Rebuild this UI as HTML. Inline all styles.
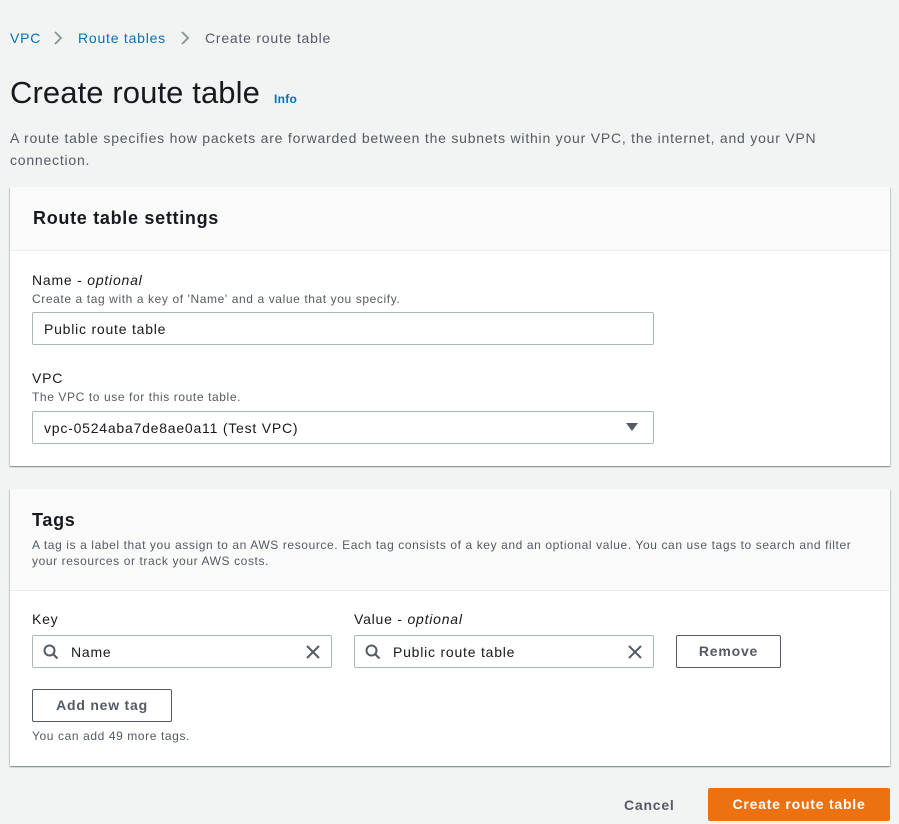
<!DOCTYPE html>
<html><head><meta charset="utf-8"><style>
*{box-sizing:border-box;margin:0;padding:0}
body{width:899px;height:824px;background:#f2f3f3;font-family:"Liberation Sans","DejaVu Sans",sans-serif;color:#16191f;position:relative;overflow:hidden;font-size:14px;letter-spacing:.78px}
.a{position:absolute;white-space:nowrap}
.card{position:absolute;left:10px;width:880px;background:#fff;box-shadow:0 1px 1px rgba(0,28,36,.3),1px 1px 1px rgba(0,28,36,.15),-1px 1px 1px rgba(0,28,36,.15)}
.hdr{position:absolute;left:0;top:0;width:100%;background:#fafafa;border-bottom:1px solid #eaeded}
.inp{position:absolute;height:33px;border:1px solid #aab7b8;border-radius:2px;background:#fff}
.inp span{position:absolute;top:8px;font-size:14px;color:#16191f}
.sm{font-size:12px;color:#545b64;letter-spacing:.6px}
.btn{position:absolute;border:1px solid #545b64;border-radius:2px;background:#fff;font-weight:bold;color:#545b64;text-align:center;font-size:14px}
h2{font-size:18px;font-weight:bold;letter-spacing:.7px}
</style></head><body>
<div class="a" style="left:10px;top:30px;color:#0073bb">VPC</div>
<svg class="a" style="left:52px;top:30px" width="12" height="16"><path d="M3 2l6 6-6 6" fill="none" stroke="#879596" stroke-width="1.8"/></svg>
<div class="a" style="left:78px;top:30px;color:#0073bb">Route tables</div>
<svg class="a" style="left:179px;top:30px" width="12" height="16"><path d="M3 2l6 6-6 6" fill="none" stroke="#879596" stroke-width="1.8"/></svg>
<div class="a" style="left:205px;top:30px;color:#545b64">Create route table</div>
<div class="a" style="left:10px;top:75px;font-size:31px;letter-spacing:.1px">Create route table</div>
<div class="a" style="left:274px;top:92px;font-size:12px;font-weight:bold;color:#0073bb;letter-spacing:.3px">Info</div>
<div class="a" style="left:10px;top:127px;color:#545b64;line-height:22px;white-space:normal;width:830px">A route table specifies how packets are forwarded between the subnets within your VPC, the internet, and your VPN connection.</div>

<div class="card" style="top:187px;height:279px">
 <div class="hdr" style="height:64px"></div>
 <h2 class="a" style="left:23px;top:21px">Route table settings</h2>
 <div class="a" style="left:22px;top:85px">Name - <i>optional</i></div>
 <div class="a sm" style="left:22px;top:105px">Create a tag with a key of 'Name' and a value that you specify.</div>
 <div class="inp" style="left:22px;top:125px;width:622px"><span style="left:11px">Public route table</span></div>
 <div class="a" style="left:22px;top:183px">VPC</div>
 <div class="a sm" style="left:22px;top:203px">The VPC to use for this route table.</div>
 <div class="inp" style="left:22px;top:224px;width:622px"><span style="left:11px">vpc-0524aba7de8ae0a11 (Test VPC)</span>
  <svg class="a" style="left:593px;top:11px" width="12" height="9"><path d="M0 0h12L6 8z" fill="#545b64"/></svg></div>
</div>

<div class="card" style="top:489px;height:277px">
 <div class="hdr" style="height:102px"></div>
 <h2 class="a" style="left:22px;top:21px">Tags</h2>
 <div class="a sm" style="left:22px;top:48px;white-space:normal;width:830px;line-height:16px">A tag is a label that you assign to an AWS resource. Each tag consists of a key and an optional value. You can use tags to search and filter your resources or track your AWS costs.</div>
 <div class="a" style="left:22px;top:122px">Key</div>
 <div class="a" style="left:344px;top:122px">Value - <i>optional</i></div>
 <div class="inp" style="left:22px;top:146px;width:300px">
  <svg class="a" style="left:10px;top:8px" width="16" height="16"><circle cx="6.5" cy="6.5" r="5" fill="none" stroke="#545b64" stroke-width="2"/><path d="M10 10l4.5 4.5" stroke="#545b64" stroke-width="2"/></svg>
  <span style="left:38px">Name</span>
  <svg class="a" style="left:272px;top:8px" width="16" height="16"><path d="M2 2l12 12M14 2L2 14" stroke="#545b64" stroke-width="2"/></svg></div>
 <div class="inp" style="left:344px;top:146px;width:300px">
  <svg class="a" style="left:10px;top:8px" width="16" height="16"><circle cx="6.5" cy="6.5" r="5" fill="none" stroke="#545b64" stroke-width="2"/><path d="M10 10l4.5 4.5" stroke="#545b64" stroke-width="2"/></svg>
  <span style="left:38px">Public route table</span>
  <svg class="a" style="left:272px;top:8px" width="16" height="16"><path d="M2 2l12 12M14 2L2 14" stroke="#545b64" stroke-width="2"/></svg></div>
 <div class="btn" style="left:666px;top:146px;width:105px;height:33px;line-height:31px">Remove</div>
 <div class="btn" style="left:22px;top:200px;width:140px;height:33px;line-height:31px">Add new tag</div>
 <div class="a sm" style="left:22px;top:240px">You can add 49 more tags.</div>
</div>

<div class="a" style="left:624px;top:797px;font-weight:bold;color:#545b64">Cancel</div>
<div class="a" style="left:708px;top:788px;width:182px;height:33px;background:#ec7211;border-radius:2px;color:#fff;font-weight:bold;text-align:center;line-height:33px">Create route table</div>
</body></html>
